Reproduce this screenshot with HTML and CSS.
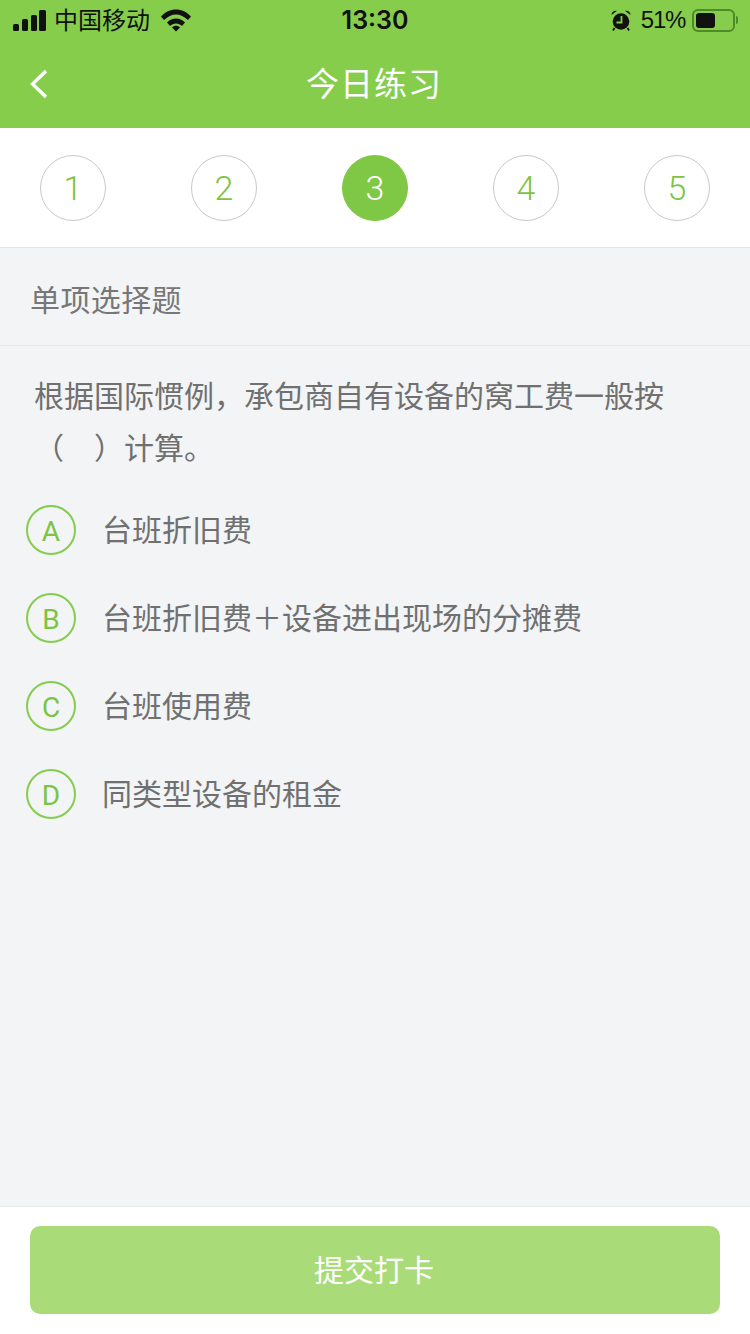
FILE: index.html
```html
<!DOCTYPE html>
<html lang="zh-CN">
<head>
    <meta charset="UTF-8">
    <meta name="viewport" content="width=device-width, initial-scale=1.0">
    <title>今日练习</title>
    <link rel="stylesheet" href="styles.css">
</head>
<body>
    <div class="top">
        <div class="status-bar">
            <div class="status-left">
                <svg class="signal" width="33" height="21" viewBox="0 0 33 21">
                    <rect x="0" y="14" width="6" height="7" rx="1.500"/>
                    <rect x="9" y="9" width="6" height="12" rx="1.500"/>
                    <rect x="18" y="5" width="6" height="16" rx="1.500"/>
                    <rect x="26" y="0" width="7" height="21" rx="1.500"/>
                </svg>
                <span class="carrier">中国移动</span>
                <svg class="wifi" width="30" height="23" viewBox="0 0 30 23">
                    <path d="M0 7.500C8-2 22-2 30 7.500L27 11C19.500 3.500 10.500 3.500 3 11Z"/>
                    <path d="M6 13.500C11 8 19 8 24 13.500L21 17C18 13.500 12 13.500 9 17Z"/>
                    <path d="M11 18.500C13 16 17 16 19 18.500L15 22.500Z"/>
                </svg>
            </div>
            <span class="clock">13:30</span>
            <div class="status-right">
                <svg class="alarm" width="20" height="21" viewBox="0 0 20 21">
                    <circle cx="10" cy="11.500" r="8.300"/>
                    <path d="M.5 5C.5 2 3 .2 6 .8Z"/>
                    <path d="M19.500 5C19.500 2 17 .2 14 .8Z"/>
                    <path d="M3.500 18L2 20.500M16.500 18L18 20.500" stroke="#111" stroke-width="1.800"/>
                    <path d="M10.500 6V12.500H5.500" fill="none" stroke="#87cd4c" stroke-width="1.800"/>
                </svg>
                <span class="battery-text">51%</span>
                <div class="battery">
                    <div class="battery-fill"></div>
                </div>
                <div class="battery-cap"></div>
            </div>
        </div>
        <div class="nav-bar">
            <svg class="back" width="20" height="32" viewBox="0 0 20 32">
                <path d="M17 3L3.500 16L17 29" fill="none" stroke="#fff" stroke-width="3.400"/>
            </svg>
            <h1>今日练习</h1>
        </div>
    </div>

    <div class="steps">
        <div class="step">1</div>
        <div class="step">2</div>
        <div class="step active">3</div>
        <div class="step">4</div>
        <div class="step">5</div>
    </div>

    <div class="main">
        <div class="type-row">单项选择题</div>
        <div class="question">根据国际惯例，承包商自有设备的窝工费一般按（　）计算。</div>
        <div class="option">
            <div class="option-key">A</div>
            <div class="option-text">台班折旧费</div>
        </div>
        <div class="option">
            <div class="option-key">B</div>
            <div class="option-text">台班折旧费＋设备进出现场的分摊费</div>
        </div>
        <div class="option">
            <div class="option-key">C</div>
            <div class="option-text">台班使用费</div>
        </div>
        <div class="option">
            <div class="option-key">D</div>
            <div class="option-text">同类型设备的租金</div>
        </div>
    </div>

    <div class="footer">
        <button class="submit-btn">提交打卡</button>
    </div>
</body>
</html>
```

FILE: styles.css
```css
* {
    box-sizing: border-box;
}
body {
    margin: 0;
    width: 750px;
    height: 1334px;
    display: flex;
    flex-direction: column;
    background-color: #f2f4f6;
    font-family: "Noto Sans CJK SC", "Liberation Sans", sans-serif;
    overflow: hidden;
}
.top {
    height: 128px;
    background-color: #87cd4c;
}
.status-bar {
    height: 40px;
    padding: 0 12px 0 13px;
    display: flex;
    align-items: center;
    justify-content: space-between;
    position: relative;
    color: #111;
}
.status-left {
    display: flex;
    align-items: center;
}
.signal {
    fill: #111;
}
.carrier {
    margin-left: 8px;
    font-size: 24px;
    line-height: 38px;
    padding-bottom: 2px;
}
.wifi {
    margin-left: 11px;
    fill: #111;
}
.clock {
    position: absolute;
    left: 0;
    right: 0;
    text-align: center;
    font-family: Inter, "Liberation Sans", sans-serif;
    font-size: 25px;
    font-weight: 600;
}
.status-right {
    display: flex;
    align-items: center;
}
.alarm {
    fill: #111;
}
.battery-text {
    margin-left: 10px;
    font-family: "Liberation Sans", sans-serif;
    font-size: 24px;
    letter-spacing: -1.300px;
}
.battery {
    width: 43px;
    height: 23px;
    margin-left: 7px;
    padding: 2px;
    border: 2px solid #4f8a2a;
    border-radius: 6px;
}
.battery-fill {
    width: 19px;
    height: 100%;
    background-color: #111;
    border-radius: 3px;
}
.battery-cap {
    width: 2px;
    height: 8px;
    margin-left: 1px;
    background-color: #4f8a2a;
    border-radius: 0 2px 2px 0;
}
.nav-bar {
    height: 88px;
    display: flex;
    align-items: center;
    justify-content: center;
    position: relative;
}
.back {
    position: absolute;
    left: 29px;
    top: 28px;
}
h1 {
    margin: 0 2px 4px 0;
    color: #fff;
    font-size: 33px;
    font-weight: 400;
    letter-spacing: 1px;
}
.steps {
    height: 120px;
    padding: 0 40px;
    display: flex;
    align-items: center;
    justify-content: space-between;
    background-color: #fff;
    border-bottom: 1px solid #e5e5e5;
}
.step {
    width: 66px;
    height: 66px;
    display: flex;
    align-items: center;
    justify-content: center;
    border: 1px solid #c9c9c9;
    border-radius: 50%;
    color: #7cc444;
    font-family: Roboto, "Liberation Sans", sans-serif;
    font-size: 34px;
    font-weight: 300;
}
.step.active {
    background-color: #7fc846;
    border-color: #7fc846;
    color: #fff;
}
.main {
    flex: 1;
}
.type-row {
    height: 98px;
    padding: 2px 0 0 30px;
    display: flex;
    align-items: center;
    border-bottom: 1px solid #e6e8ea;
    color: #777;
    font-size: 30px;
    letter-spacing: 0.4px;
}
.question {
    padding: 22px 35px 14px 34px;
    color: #707070;
    font-size: 30px;
    line-height: 52px;
}
.option {
    height: 88px;
    padding-left: 26px;
    display: flex;
    align-items: center;
}
.option-key {
    width: 50px;
    height: 50px;
    padding-top: 2px;
    flex-shrink: 0;
    display: flex;
    align-items: center;
    justify-content: center;
    border: 2px solid #86cc4e;
    border-radius: 50%;
    color: #7cc444;
    font-family: Roboto, "Liberation Sans", sans-serif;
    font-size: 28px;
    font-weight: 400;
}
.option-text {
    margin-left: 26px;
    padding-bottom: 4px;
    color: #707070;
    font-size: 30px;
}
.footer {
    height: 128px;
    padding: 19px 30px 0;
    background-color: #fff;
    border-top: 1px solid #e6e8ea;
}
.submit-btn {
    width: 100%;
    height: 88px;
    padding: 0 2px 4px 0;
    border: 0;
    border-radius: 10px;
    background-color: #a9dc78;
    color: #fff;
    font-family: inherit;
    font-size: 30px;
}
```
